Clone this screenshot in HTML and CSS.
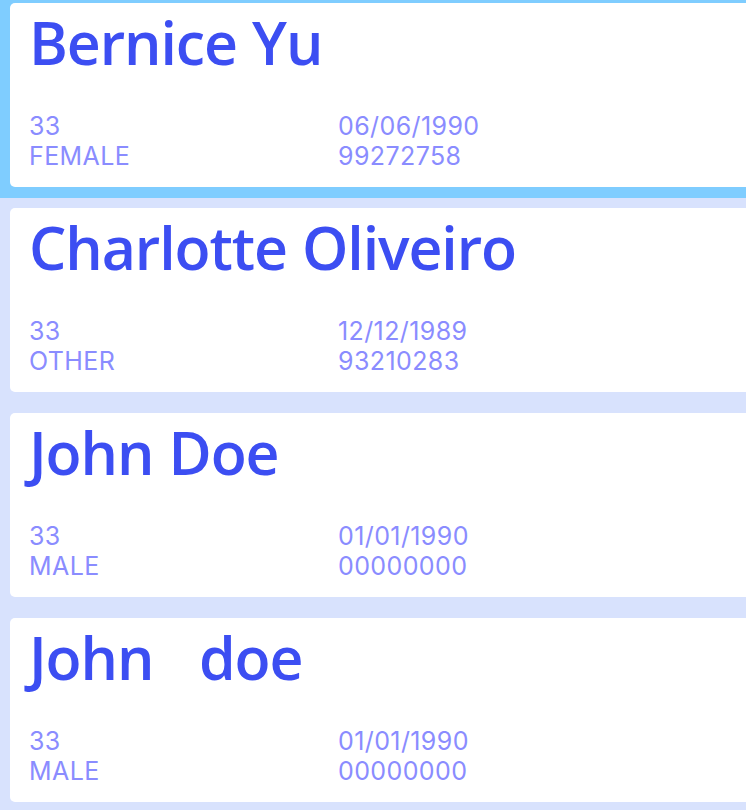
FILE: index.html
```html
<!DOCTYPE html>
<html>
<head>
<meta charset="utf-8">
<link rel="stylesheet" href="styles.css">
</head>
<body>
<div class="list">
  <div class="cell selected first">
    <div class="card">
      <div class="name">Bernice Yu</div>
      <div class="details">
        <div class="field">33</div>
        <div class="field">06/06/1990</div>
        <div class="field">FEMALE</div>
        <div class="field">99272758</div>
      </div>
    </div>
  </div>
  <div class="cell">
    <div class="card">
      <div class="name">Charlotte Oliveiro</div>
      <div class="details">
        <div class="field">33</div>
        <div class="field">12/12/1989</div>
        <div class="field">OTHER</div>
        <div class="field">93210283</div>
      </div>
    </div>
  </div>
  <div class="cell">
    <div class="card">
      <div class="name">John Doe</div>
      <div class="details">
        <div class="field">33</div>
        <div class="field">01/01/1990</div>
        <div class="field">MALE</div>
        <div class="field">00000000</div>
      </div>
    </div>
  </div>
  <div class="cell">
    <div class="card">
      <div class="name">John&nbsp;&nbsp;&nbsp;doe</div>
      <div class="details">
        <div class="field">33</div>
        <div class="field">01/01/1990</div>
        <div class="field">MALE</div>
        <div class="field">00000000</div>
      </div>
    </div>
  </div>
</div>
</body>
</html>
```

FILE: styles.css
```css
html, body {
  margin: 0;
  padding: 0;
  height: 100%;
  overflow: hidden;
  background: #d8e2fd;
}

.list {
  display: flex;
  flex-direction: column;
  margin-top: -7px;
}

.cell {
  height: 205px;
  box-sizing: border-box;
  padding: 10px 0 11px 10px;
  background: #d8e2fd;
  overflow: hidden;
}

.cell.selected {
  background: #7fcdff;
}

.card {
  width: 760px;
  height: 184px;
  box-sizing: border-box;
  background: #ffffff;
  border-radius: 5px;
  padding: 0 0 0 19px;
  display: flex;
  flex-direction: column;
}

.name {
  font-family: "Open Sans", sans-serif;
  font-weight: 600;
  font-size: 59px;
  letter-spacing: -1.1px;
  word-spacing: 1px;
  line-height: 82px;
  color: #3c4ef2;
  white-space: pre;
  margin-top: -2px;
}

.details {
  display: grid;
  grid-template-columns: 309px 309px;
  margin-top: 28px;
  font-family: Inter, sans-serif;
  font-size: 25px;
  letter-spacing: 0.4px;
  line-height: 30px;
  color: #8a8cff;
}
```
